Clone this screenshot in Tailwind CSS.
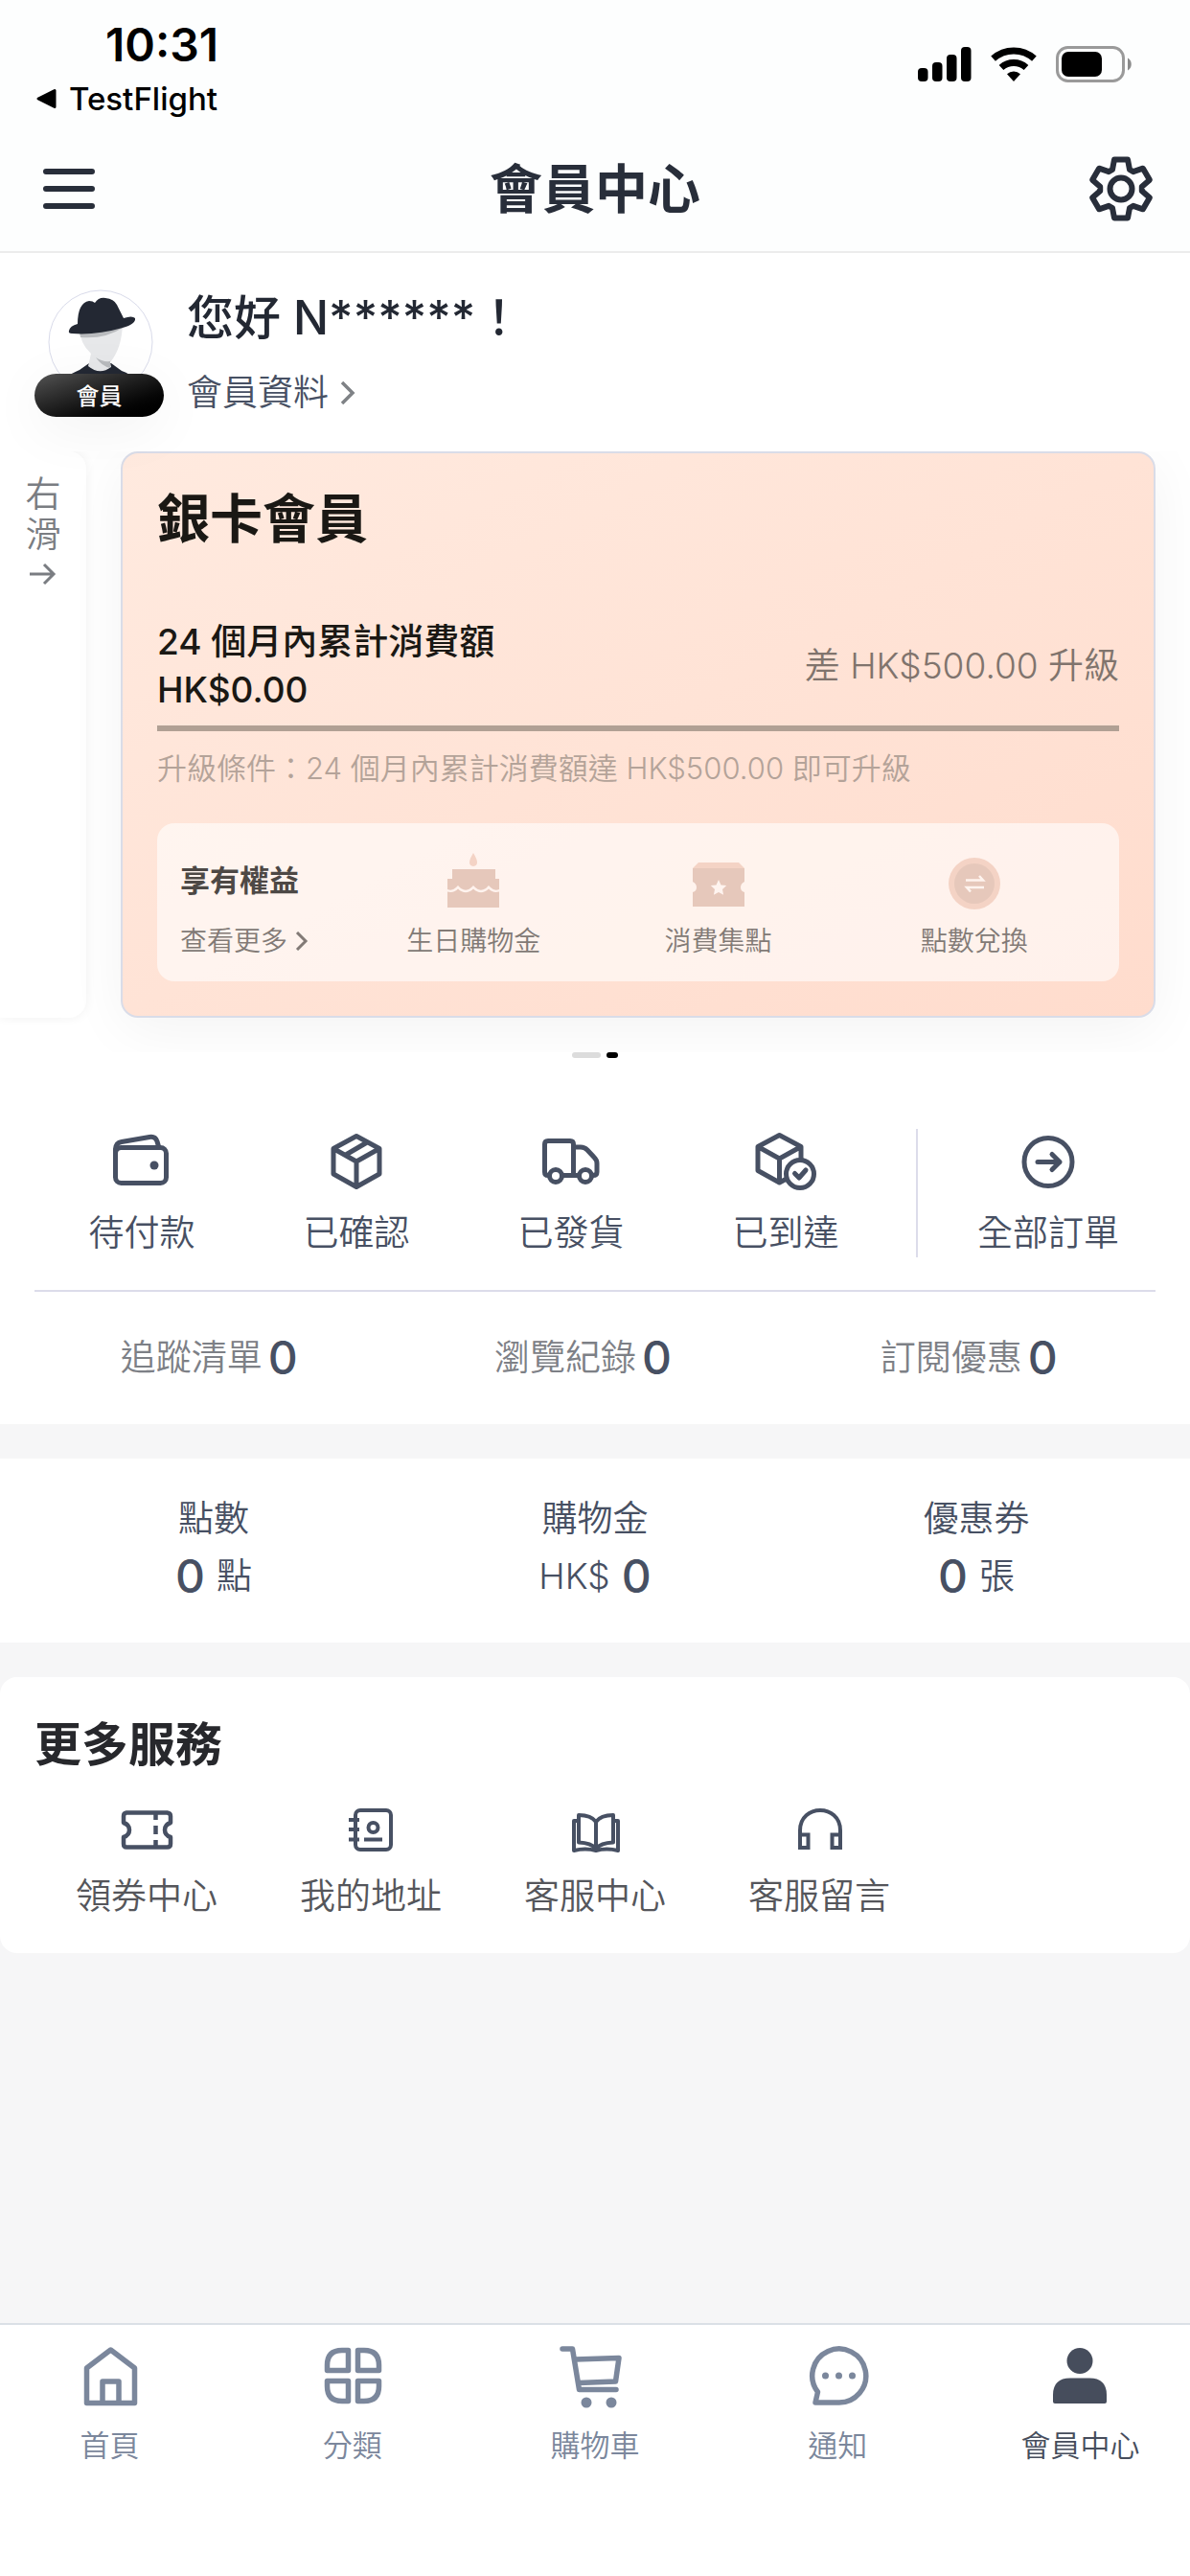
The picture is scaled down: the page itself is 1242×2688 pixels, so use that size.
<!DOCTYPE html>
<html lang="zh-Hant">
<head>
<meta charset="utf-8">
<meta name="viewport" content="width=device-width, initial-scale=1">
<title>會員中心</title>
<script src="https://cdn.jsdelivr.net/npm/@tailwindcss/browser@4"></script>
</head>
<body class="min-h-screen flex flex-col overflow-x-hidden bg-[#f6f6f7] font-['Inter','Noto_Sans_CJK_TC',sans-serif] text-[37px] leading-[50px] font-[350] text-[#475063]">

<!-- Status bar -->
<div class="h-[132px] bg-[#fdfefe] flex justify-between pl-9 pr-15 text-black">
  <div class="pt-[22px]">
    <div class="pl-[74px] text-[48px] leading-[50px] font-semibold">10:31</div>
    <a href="#" class="mt-1.5 flex items-center gap-3 text-[33px] leading-[50px] font-medium">
      <svg class="w-6 h-6" viewBox="0 0 24 24"><path d="M4 12 21 3.500V20.500Z" fill="#000" stroke="#000" stroke-width="3" stroke-linejoin="round"/></svg>
      <span>TestFlight</span>
    </a>
  </div>
  <div class="flex items-center h-[38px] mt-[48px] gap-5">
    <svg class="w-14 h-9" viewBox="0 0 56 36"><rect x="0" y="22" width="10.500" height="14" rx="4"/><rect x="15" y="16" width="10.500" height="20" rx="4"/><rect x="30" y="8" width="10.500" height="28" rx="4"/><rect x="45" y="0" width="10.500" height="36" rx="4"/></svg>
    <svg class="w-12 h-9" viewBox="0 0 48 36"><path d="M2.600 12.200A32 32 0 0 1 45.400 12.200M11 21.500A19.500 19.500 0 0 1 37 21.500" fill="none" stroke="#000" stroke-width="7"/><path d="M24 36 17 28.200A10.500 10.500 0 0 1 31 28.200Z"/></svg>
    <svg class="w-20 h-[38px]" viewBox="0 0 80 38"><rect x="1.500" y="1.500" width="69" height="35" rx="11" fill="none" stroke="#9a9a9a" stroke-width="3"/><rect x="6" y="6" width="42" height="26" rx="7"/><path d="M75 12.500c5 2.500 5 10.500 0 13z" fill="#8a8a8a"/></svg>
  </div>
</div>

<!-- Page header -->
<header class="h-[132px] bg-[#fdfefe] border-b-2 border-[#ececec] flex items-center justify-between px-9 text-[#282e3a]">
  <button type="button" aria-label="選單" class="w-[72px] h-[72px]">
    <svg class="w-full h-full" viewBox="0 0 72 72" fill="none" stroke="currentColor" stroke-width="6" stroke-linecap="round"><path d="M12 18H60M12 36H60M12 54H60"/></svg>
  </button>
  <h1 class="text-[55px] leading-[72px] font-semibold">會員中心</h1>
  <button type="button" aria-label="設定" class="w-[72px] h-[72px]">
    <svg class="w-full h-full" viewBox="-36 -36 72 72" fill="none" stroke="currentColor" stroke-width="6" stroke-linejoin="round"><path d="M-9-20-7-30.500H7L9-20 12.800-17.800 22.900-21.300 29.900-9.200 21.800-2.200V2.200L29.900 9.200 22.900 21.300 12.800 17.800 9 20 7 30.500H-7L-9 20-12.800 17.800-22.900 21.300-29.900 9.200-21.800 2.200V-2.200L-29.900-9.200-22.900-21.300-12.800-17.800Z"/><circle r="11.500"/></svg>
  </button>
</header>

<main class="flex flex-col">
  <section class="bg-white">
    <!-- Profile -->
    <div class="flex gap-6 px-9 pt-[38px] pb-9">
      <div class="w-[135px] h-[133px] relative flex flex-col items-center justify-end">
        <svg class="absolute top-0 left-3.5 w-[110px] h-[110px]" viewBox="0 0 110 110">
          <defs><clipPath id="avatar"><circle cx="55" cy="55" r="54"/></clipPath></defs>
          <circle cx="55" cy="55" r="54" fill="#fff" stroke="#d9dbea"/>
          <g clip-path="url(#avatar)">
            <path d="M10 110V96Q24 88 33 84L43 77H66L77 85Q96 92 100 110Z" fill="#232833"/>
            <path d="M33 40Q33 56 45 67L42 80Q54 90 66 81L65 76Q77 62 78 36Z" fill="#e7e8ea"/>
            <path d="M50 71Q57 76 65 75V82Q56 80 50 71Z" fill="#b9bbbe"/>
            <path d="M33 45Q56 46 78 36V40Q60 52 34 50Z" fill="#b9bbbe"/>
            <path d="M22 43Q23 38 31 36Q31 14 43 12Q47 12 49 14Q53 8 60 9Q69 10 72 16L79 30Q88 27 91 30Q92 36 78 40Q50 48 25 46Q21 46 22 43Z" fill="#232833"/>
          </g>
        </svg>
        <span class="relative w-full h-[45px] rounded-full bg-linear-to-br from-[#555] to-black text-white text-[24px] leading-[48px] font-medium text-center shadow-[0_12px_60px_rgba(0,0,0,0.06)]">會員</span>
      </div>
      <div class="flex flex-col justify-between">
        <h2 class="text-[49px] leading-[60px] font-medium text-[#232833]">您好 N******！</h2>
        <a href="#" class="flex items-center gap-3">會員資料
          <svg class="w-4 h-6" viewBox="0 0 16 24" fill="none" stroke="#7f8286" stroke-width="3.500"><path d="M2 1 13 12 2 23"/></svg>
        </a>
      </div>
    </div>

    <!-- Member level carousel -->
    <div class="flex gap-9 pr-9 pb-9 overflow-hidden">
      <div class="w-[90px] shrink-0 bg-white rounded-r-[18px] shadow-[0_0_12px_rgba(0,0,0,0.06)] flex flex-col items-center pt-6 leading-[42px] text-[#7a7d82]">
        <span>右</span><span>滑</span>
        <svg class="mt-2 w-7 h-6" viewBox="0 0 28 24" fill="none" stroke="currentColor" stroke-width="3"><path d="M0 12H25M15 2 25 12 15 22"/></svg>
      </div>
      <article class="flex-1 min-w-0 rounded-[18px] border-2 border-[#d9dce8] bg-linear-to-br from-[#ffeadf] to-[#ffdccd] px-9 pt-8 pb-9 shadow-[0_12px_60px_rgba(0,0,0,0.05)]">
        <h3 class="text-[55px] leading-[72px] font-semibold text-[#1a1814]">銀卡會員</h3>
        <div class="mt-[68px] flex items-center justify-between">
          <p class="font-medium text-[#1a1814]">24 個月內累計消費額<br>HK$0.00</p>
          <p class="text-[#80746d]">差 HK$500.00 升級</p>
        </div>
        <div class="mt-3 h-1.5 bg-[#b1a094]"></div>
        <p class="mt-[18px] text-[31px] leading-[42px] text-[#b4a399]">升級條件：24 個月內累計消費額達 HK$500.00 即可升級</p>
        <div class="mt-9 rounded-[18px] bg-white/60 pl-6 pr-[18px] pt-[30px] pb-6 grid grid-cols-[185fr_242fr_268fr_266fr] text-[28px] leading-9 text-[#827a76]">
          <div class="flex flex-col gap-[15px]">
            <div class="h-[60px] flex items-center text-[31px] font-semibold text-[#4d4845]">享有權益</div>
            <a href="#" class="flex items-center gap-2">查看更多
              <svg class="w-3.5 h-5" viewBox="0 0 14 20" fill="none" stroke="currentColor" stroke-width="3"><path d="M2 1 11 10 2 19"/></svg>
            </a>
          </div>
          <div class="flex flex-col items-center gap-[15px]">
            <svg class="w-[60px] h-[60px]" viewBox="0 0 60 60"><path d="M30 1Q38 14 30 15Q22 14 30 1Z" fill="#f4d3c5"/><path d="M8 18H53V28H57V39Q52 41 48 37L46 35 43 38Q37 42 32 37L30 35 28 37Q23 42 17 38L14 35 12 37Q8 41 3 39V28H8Z" fill="#e6c8bb"/><path d="M3 41.500Q10 43 14 38.500Q22 46 30 38.500Q38 46 46 38.500Q50 43 57 41.500V58H3Z" fill="#e6c8bb"/></svg>
            <span>生日購物金</span>
          </div>
          <div class="flex flex-col items-center gap-[15px]">
            <svg class="w-[60px] h-[60px]" viewBox="0 0 60 60"><path d="M3 17 9 11H51L57 17Z" fill="#f4d3c5"/><path d="M3 17H57V31Q53 33 53 37Q53 41 57 42V57H3V42Q7 41 7 37Q7 33 3 31Z" fill="#e6c8bb"/><path d="m30 29 2.500 5.400 5.700.7-4.200 4 1.100 5.700-5.100-2.800-5.100 2.800 1.100-5.700-4.200-4 5.700-.7Z" fill="#fff4ef"/></svg>
            <span>消費集點</span>
          </div>
          <div class="flex flex-col items-center gap-[15px]">
            <svg class="w-[60px] h-[60px]" viewBox="0 0 60 60"><circle cx="30" cy="33" r="27" fill="#f4d3c5"/><circle cx="30" cy="33" r="21" fill="#e6c8bb"/><path d="M21 29.500H39L35 25M40 37H22L26 41.500" fill="none" stroke="#fff4ef" stroke-width="2.500"/></svg>
            <span>點數兌換</span>
          </div>
        </div>
      </article>
    </div>
    <div class="flex justify-center gap-1.5">
      <span class="w-[30px] h-1.5 rounded-full bg-[#dcdcdc]"></span>
      <span class="w-3 h-1.5 rounded-full bg-black"></span>
    </div>

    <!-- Orders -->
    <div class="px-9 pt-[74px]">
      <nav class="flex pb-[34px] border-b-2 border-[#dcdcea]">
        <a href="#" class="flex-1 flex flex-col items-center gap-3">
          <svg class="w-[72px] h-[72px]" viewBox="0 0 72 72" fill="none" stroke="currentColor" stroke-width="5" stroke-linejoin="round"><rect x="8.500" y="19.500" width="53" height="37" rx="6"/><path d="M8.500 26V21Q9 14.500 15 13.500L44 8.500Q50 7.500 52 13L54 20"/><circle cx="49" cy="38" r="4.500" fill="currentColor" stroke="none"/></svg>
          待付款
        </a>
        <a href="#" class="flex-1 flex flex-col items-center gap-3">
          <svg class="w-[72px] h-[72px]" viewBox="0 0 72 72" fill="none" stroke="currentColor" stroke-width="5" stroke-linejoin="round"><path d="M36 7.500 60 20.500V47L36 60.500 12 47V20.500ZM12 20.500 36 34 60 20.500M36 34V60M24 27.500 48 13.500"/></svg>
          已確認
        </a>
        <a href="#" class="flex-1 flex flex-col items-center gap-3">
          <svg class="w-[72px] h-[72px]" viewBox="0 0 72 72" fill="none" stroke="currentColor" stroke-width="5" stroke-linejoin="round"><path d="M13 48.500H12Q8.500 48.500 8.500 45V16Q8.500 12.500 12 12.500H35Q38.500 12.500 38.500 16V48.500H27M38.500 19H46Q50 19 53 22L60 29.500Q63 32.500 63 36V45Q63 48.500 59 48.500M38.500 48.500H44"/><circle cx="20" cy="49" r="6.500"/><circle cx="51" cy="49" r="6.500"/></svg>
          已發貨
        </a>
        <a href="#" class="flex-1 flex flex-col items-center gap-3">
          <svg class="w-[72px] h-[72px]" viewBox="0 0 72 72" fill="none" stroke="currentColor" stroke-width="5" stroke-linejoin="round"><path d="M52 31V18.500L29.500 6.500 7 18.500V43.500L29.500 56 36 52.500M7 18.500 29.500 31 52 18.500M29.500 31V56"/><circle cx="51" cy="47" r="14.500" fill="#fff"/><path d="m45.500 46.500 4.500 4.500 7-8" stroke-linecap="round"/></svg>
          已到達
        </a>
        <div class="w-0.5 mx-6 bg-[#dcdcea]"></div>
        <a href="#" class="flex-1 flex flex-col items-center gap-3">
          <svg class="w-[72px] h-[72px]" viewBox="0 0 72 72" fill="none" stroke="currentColor" stroke-width="5" stroke-linejoin="round" stroke-linecap="round"><circle cx="36" cy="34.500" r="25"/><path d="M25 34.500H48M40 26.500 48 34.500 40 42.500"/></svg>
          全部訂單
        </a>
      </nav>
      <nav class="h-[138px] grid grid-cols-[364fr_416fr_389fr] items-center text-[#7d8086]">
        <a href="#" class="flex items-center justify-center gap-1.5">追蹤清單<b class="text-[48px] font-medium text-[#475063]">0</b></a>
        <a href="#" class="flex items-center justify-center gap-1.5">瀏覽紀錄<b class="text-[48px] font-medium text-[#475063]">0</b></a>
        <a href="#" class="flex items-center justify-center gap-1.5">訂閱優惠<b class="text-[48px] font-medium text-[#475063]">0</b></a>
      </nav>
    </div>
  </section>

  <!-- Points, credit, coupons -->
  <section class="mt-9 bg-white px-6 py-9 grid grid-cols-3 text-center">
    <a href="#"><span class="block leading-[54px]">點數</span><span class="flex items-center justify-center gap-3 leading-[66px]"><b class="text-[48px] font-medium">0</b>點</span></a>
    <a href="#"><span class="block leading-[54px]">購物金</span><span class="flex items-center justify-center gap-3 leading-[66px]">HK$<b class="text-[48px] font-medium">0</b></span></a>
    <a href="#"><span class="block leading-[54px]">優惠券</span><span class="flex items-center justify-center gap-3 leading-[66px]"><b class="text-[48px] font-medium">0</b>張</span></a>
  </section>

  <!-- More services -->
  <section class="mt-9 bg-white rounded-[18px] px-9 pt-9 pb-[34px]">
    <h2 class="text-[49px] leading-[70px] font-semibold text-[#27282c]">更多服務</h2>
    <nav class="mt-6 grid grid-cols-5">
      <a href="#" class="flex flex-col items-center gap-3.5">
        <svg class="w-[60px] h-[60px]" viewBox="0 0 60 60" fill="none" stroke="currentColor" stroke-width="4.500" stroke-linejoin="round"><path d="M9 11.500H51.500Q55 12 55 15V22Q49 24 49 29.500Q49 35 55 37V44Q55 47.500 51.500 47.500H9Q6 47.500 6 44V37Q12 35 12 29.500Q12 24 6 22V15Q6 12 9 11.500Z"/><path d="M39.500 12V19M39.500 25V34M39.500 40V47"/></svg>
        <span class="text-[#55565b]">領券中心</span>
      </a>
      <a href="#" class="flex flex-col items-center gap-3.5">
        <svg class="w-[60px] h-[60px]" viewBox="0 0 60 60" fill="none" stroke="currentColor" stroke-width="4"><rect x="14" y="9" width="37" height="41" rx="5"/><path d="M7 19H18M7 29H18M7 39.500H18M23 39.500H42"/><circle cx="32.500" cy="27" r="5"/></svg>
        <span class="text-[#55565b]">我的地址</span>
      </a>
      <a href="#" class="flex flex-col items-center gap-3.5">
        <svg class="w-[60px] h-[60px]" viewBox="0 0 60 60" fill="none" stroke="currentColor" stroke-width="4" stroke-linejoin="round"><path d="M31 21Q26 14 13 14V42.500Q26 43 31 49Q36 43 49 42.500V14Q36 14 31 21V49M12 20H8V51Q20 48 31 51Q42 48 54 51V20H50"/></svg>
        <span class="text-[#55565b]">客服中心</span>
      </a>
      <a href="#" class="flex flex-col items-center gap-3.5">
        <svg class="w-[60px] h-[60px]" viewBox="0 0 60 60" fill="none" stroke="currentColor" stroke-width="4"><path d="M10 35V30C10 2 52 2 52 30V35"/><path d="M10 34.500H18.500V48H10ZM43.500 34.500H52V48H43.500Z"/></svg>
        <span class="text-[#55565b]">客服留言</span>
      </a>
    </nav>
  </section>
</main>

<!-- Tab bar -->
<footer class="mt-auto bg-white border-t-2 border-[#dbe0e6] pt-5 pb-[118px]">
  <nav class="-mx-3 grid grid-cols-5 text-[31px] leading-9 text-[#7b879c]">
    <a href="#" class="flex flex-col items-center gap-[22px]">
      <svg class="w-[66px] h-[66px]" viewBox="0 0 66 66" fill="none" stroke="currentColor" stroke-width="5.500" stroke-linejoin="round"><path d="M33.500 6 58.500 25V61.500H8.500V25ZM25 61V39H42V61"/></svg>
      首頁
    </a>
    <a href="#" class="flex flex-col items-center gap-[22px]">
      <svg class="w-[66px] h-[66px]" viewBox="0 0 66 66" fill="none" stroke="currentColor" stroke-width="5.500" stroke-linejoin="round"><path d="M28.500 6.500V27.500H6.500V22Q6.500 6.500 22 6.500ZM38.500 6.500V27.500H60.500V22Q60.500 6.500 45 6.500ZM28.500 59.500V38.500H6.500V44Q6.500 59.500 22 59.500ZM38.500 59.500V38.500H60.500V44Q60.500 59.500 45 59.500Z"/></svg>
      分類
    </a>
    <a href="#" class="flex flex-col items-center gap-[22px]">
      <svg class="w-[66px] h-[66px] overflow-visible" viewBox="0 0 66 66" fill="none" stroke="currentColor" stroke-width="5.500" stroke-linejoin="round" stroke-linecap="round"><path d="M-1 5H9.500L16.500 47.500H55M12.500 16 58 14.500 54.500 39 16 40.500"/><g fill="currentColor" stroke="none"><circle cx="24" cy="61" r="5.500"/><circle cx="50" cy="61" r="5.500"/></g></svg>
      購物車
    </a>
    <a href="#" class="flex flex-col items-center gap-[22px]">
      <svg class="w-[66px] h-[66px]" viewBox="0 0 66 66" fill="none" stroke="currentColor" stroke-width="5.500" stroke-linejoin="round"><path d="M34 61H10L12.500 50A28 28 0 1 1 34 61Z"/><g fill="currentColor" stroke="none"><circle cx="20.500" cy="33" r="3.500"/><circle cx="34.500" cy="33" r="3.500"/><circle cx="48.500" cy="33" r="3.500"/></g></svg>
      通知
    </a>
    <a href="#" aria-current="page" class="flex flex-col items-center gap-[22px] text-[#464d5c]">
      <svg class="w-[66px] h-[66px]" viewBox="0 0 66 66" fill="currentColor"><circle cx="33" cy="17.500" r="13.500"/><path d="M5 60V53Q5 35.500 23 35.500H43Q61 35.500 61 53V60Q61 62 59 62H7Q5 62 5 60Z"/></svg>
      會員中心
    </a>
  </nav>
</footer>
</body>
</html>
